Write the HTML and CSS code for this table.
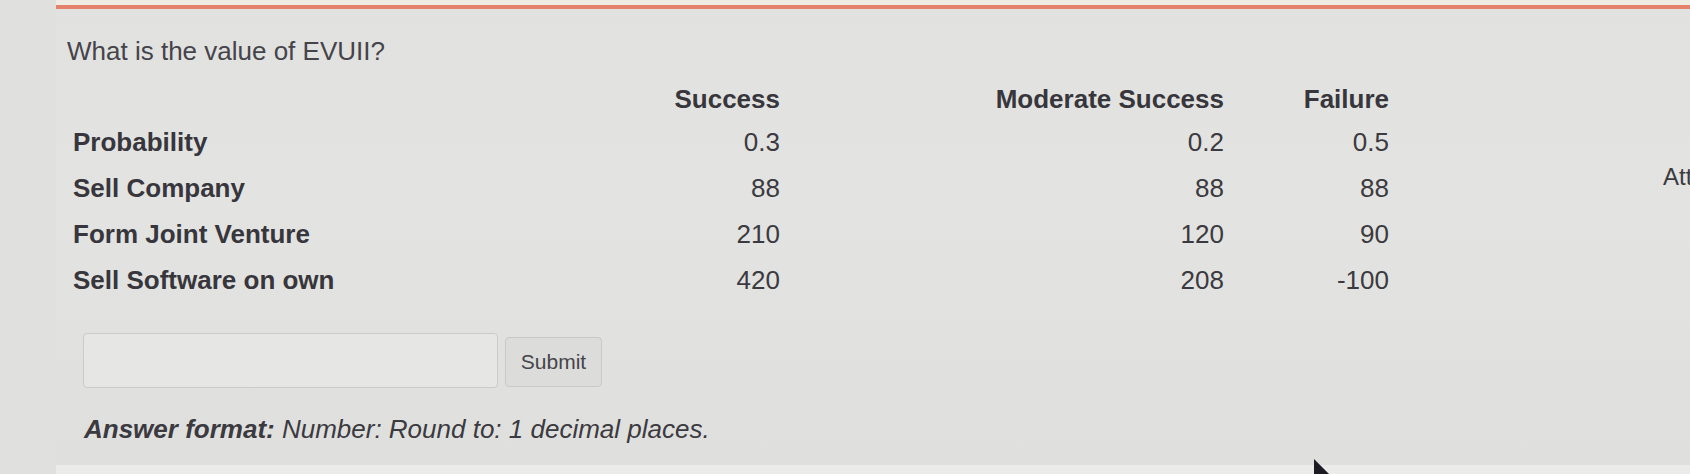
FILE: index.html
```html
<!DOCTYPE html>
<html lang="en">
<head>
<meta charset="utf-8">
<title>EVUII question</title>
<link rel="stylesheet" href="styles.css">
</head>
<body>
<div class="screen">
  <div class="panel">
    <div class="question">What is the value of EVUII?</div>
    <div class="table">
      <div class="cell head"></div>
      <div class="cell head num">Success</div>
      <div class="cell head num">Moderate Success</div>
      <div class="cell head num">Failure</div>

      <div class="cell label">Probability</div>
      <div class="cell num">0.3</div>
      <div class="cell num">0.2</div>
      <div class="cell num">0.5</div>

      <div class="cell label">Sell Company</div>
      <div class="cell num">88</div>
      <div class="cell num">88</div>
      <div class="cell num">88</div>

      <div class="cell label">Form Joint Venture</div>
      <div class="cell num">210</div>
      <div class="cell num">120</div>
      <div class="cell num">90</div>

      <div class="cell label">Sell Software on own</div>
      <div class="cell num">420</div>
      <div class="cell num">208</div>
      <div class="cell num">-100</div>
    </div>
    <div class="answer-row">
      <input class="answer-input" type="text" aria-label="Answer">
      <button class="submit" type="button">Submit</button>
    </div>
    <div class="format"><span class="format-label">Answer format:</span> Number: Round to: 1 decimal places.</div>
    <div class="side">Att</div>
  </div>
  <svg class="cursor" width="30" height="20" viewBox="0 0 30 20"><path d="M2 0 L2 20 L22 20 Z" fill="#1c1a22"/></svg>
</div>
</body>
</html>
```

FILE: styles.css
```css
html, body {
  margin: 0;
  padding: 0;
}
body {
  width: 1690px;
  height: 474px;
  overflow: hidden;
  background: #e9e9e7;
  font-family: "Liberation Sans", Arial, sans-serif;
  color: #3b3a40;
}
.screen {
  position: relative;
  width: 1690px;
  height: 474px;
  background: linear-gradient(90deg, #e0e0de 0, #e0e0de 56px, #ebebe9 56px);
}
.panel {
  position: relative;
  margin-left: 56px;
  padding-top: 5px;
  height: 465px;
  box-sizing: border-box;
  background: linear-gradient(180deg, #efece4 0, #efece4 5px, #e1e1df 5px, #e3e3e1 200px, #dfdfdd 465px);
}
.panel::before {
  content: "";
  display: block;
  height: 4px;
  background: #e5826b;
}
.question {
  margin: 27px 0 0 11px;
  font-size: 26px;
  line-height: 30px;
  color: #45444a;
}
.table {
  display: grid;
  grid-template-columns: 400px 307px 444px 165px;
  grid-template-rows: 42px repeat(4, 46px);
  margin: 11px 0 0 17px;
  font-size: 26px;
}
.cell {
  display: flex;
  align-items: center;
  white-space: nowrap;
}
.num {
  justify-content: flex-end;
}
.head {
  font-weight: bold;
  color: #37363c;
  padding-top: 2px;
}
.label {
  font-weight: bold;
  color: #37363c;
}
.answer-row {
  display: flex;
  align-items: center;
  gap: 7px;
  margin: 30px 0 0 27px;
}
.answer-input {
  width: 415px;
  height: 55px;
  box-sizing: border-box;
  border: 1px solid #cbcbc9;
  border-radius: 4px;
  background: #e6e6e4;
  margin: 0;
}
.submit {
  width: 97px;
  height: 50px;
  box-sizing: border-box;
  border: 1px solid #c9c9c7;
  border-radius: 4px;
  background: #dcdcda;
  font-family: "Liberation Sans", Arial, sans-serif;
  font-size: 21px;
  color: #46454b;
  padding: 0;
  margin-top: 3px;
}
.format {
  margin: 26px 0 0 28px;
  font-size: 26px;
  line-height: 30px;
  font-style: italic;
  color: #3b3a40;
}
.format-label {
  font-weight: bold;
}
.side {
  position: absolute;
  left: 1607px;
  top: 163px;
  font-size: 24px;
  line-height: 28px;
  color: #3b3a40;
}
.cursor {
  position: absolute;
  left: 1312px;
  top: 459px;
}
```
